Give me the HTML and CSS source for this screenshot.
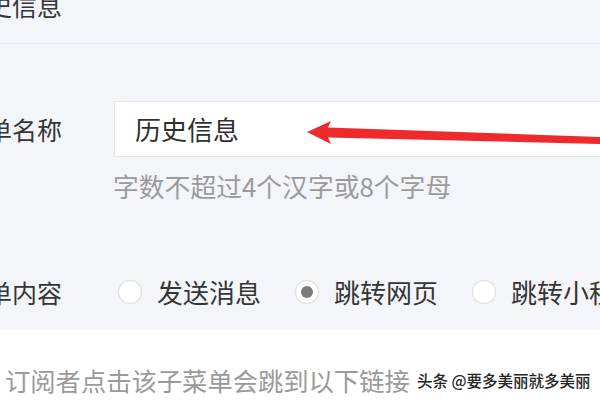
FILE: index.html
```html
<!DOCTYPE html>
<html lang="zh-CN">
<head>
<meta charset="utf-8">
<title>菜单设置</title>
<link rel="stylesheet" href="styles.css">
</head>
<body>
<div class="page">
  <div class="top-band">
    <div class="label-cell"><span class="label">历史信息</span></div>
  </div>
  <div class="form">
    <div class="row name-row">
      <div class="label-cell"><span class="label">菜单名称</span></div>
      <div class="input">历史信息</div>
    </div>
    <div class="hint">字数不超过4个汉字或8个字母</div>
    <div class="row radio-row">
      <div class="label-cell"><span class="label">菜单内容</span></div>
      <div class="radios">
        <div class="option"><span class="radio"></span><span class="opt-text">发送消息</span></div>
        <div class="option"><span class="radio checked"></span><span class="opt-text">跳转网页</span></div>
        <div class="option"><span class="radio"></span><span class="opt-text">跳转小程序</span></div>
      </div>
    </div>
  </div>
  <div class="bottom">
    <div class="desc">订阅者点击该子菜单会跳到以下链接</div>
  </div>
  <svg class="arrow" width="600" height="400" viewBox="0 0 600 400">
    <polygon points="307,132 331,121 328,127.5 600,137 600,144 328,137.5 331,144" fill="#ee2a2d"/>
  </svg>
  <div class="watermark">头条 @要多美丽就多美丽</div>
</div>
</body>
</html>
```

FILE: styles.css
```css
html, body {
  margin: 0;
  padding: 0;
  background: #ffffff;
}
body {
  width: 600px;
  height: 400px;
  overflow: hidden;
  font-family: "Noto Sans CJK SC", "Noto Sans", sans-serif;
  color: #353535;
}
.page {
  position: relative;
  width: 600px;
  height: 400px;
  overflow: hidden;
}
.top-band {
  display: flex;
  align-items: flex-start;
  height: 43px;
  background: #f4f5f9;
  border-bottom: 1px solid #e7e8ed;
}
.top-band .label-cell {
  margin-top: -8px;
}
.label-cell {
  width: 62px;
  flex: none;
  display: flex;
  justify-content: flex-end;
}
.label {
  white-space: nowrap;
  font-size: 25px;
  line-height: 26px;
  color: #353535;
}
.form {
  background: #f4f5f9;
  padding-top: 57px;
  padding-bottom: 25px;
}
.row {
  display: flex;
  align-items: center;
}
.input {
  margin-left: 52px;
  width: 560px;
  height: 54px;
  flex: none;
  box-sizing: content-box;
  background: #ffffff;
  border: 1px solid #e6e7eb;
  padding-left: 20px;
  display: flex;
  align-items: center;
  font-size: 26px;
  line-height: 26px;
  color: #2f2f2f;
  white-space: nowrap;
}
.hint {
  margin: 16px 0 0 113px;
  font-size: 25.8px;
  line-height: 26px;
  color: #9b9b9b;
  white-space: nowrap;
}
.radio-row {
  margin-top: 80px;
}
.radios {
  margin-left: 52px;
  display: flex;
  align-items: center;
  white-space: nowrap;
}
.option {
  display: flex;
  align-items: center;
  margin-left: 4px;
  margin-right: 30px;
}
.radio {
  width: 22px;
  height: 22px;
  border-radius: 50%;
  border: 1px solid #dedede;
  background: #ffffff;
  box-shadow: 0 0 1px rgba(0,0,0,0.08);
  display: flex;
  align-items: center;
  justify-content: center;
  flex: none;
}
.radio.checked::after {
  content: "";
  width: 12px;
  height: 12px;
  border-radius: 50%;
  background: #7b7b7b;
}
.opt-text {
  margin-left: 15px;
  font-size: 26px;
  line-height: 26px;
  color: #353535;
}
.bottom {
  padding-top: 37px;
  padding-left: 5px;
}
.desc {
  font-size: 25.3px;
  line-height: 26px;
  color: #9a9a9a;
  white-space: nowrap;
}
.arrow {
  position: absolute;
  left: 0;
  top: 0;
  pointer-events: none;
}
.watermark {
  position: absolute;
  left: 417px;
  top: 370px;
  font-size: 15.5px;
  line-height: 20px;
  font-weight: 500;
  color: #262626;
  white-space: nowrap;
  text-shadow: 0 0 2px #ffffff, 0 0 2px #ffffff;
}
```
